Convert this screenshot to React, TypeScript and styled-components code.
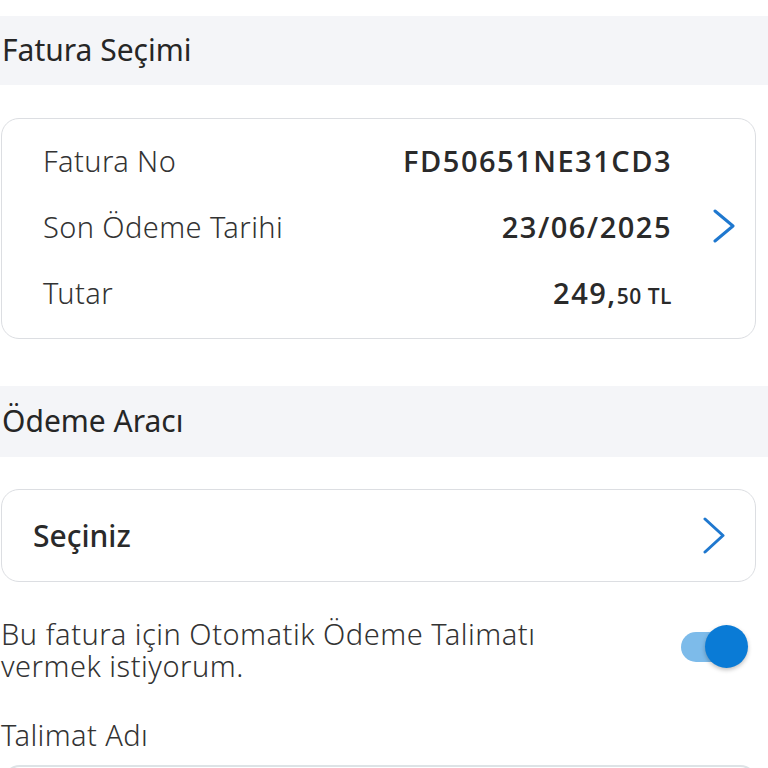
import * as React from 'react';
import styled, { createGlobalStyle } from 'styled-components';

const GlobalStyle = createGlobalStyle`
    html, body {
        margin: 0;
        padding: 0;
        background: #ffffff;
    }
    body {
        font-family: "Noto Sans", "Open Sans", sans-serif;
        color: #2b2b2b;
    }
`;

const StyledPage: any = styled.div`
    width: 768px;
    padding-top: 16px;
    display: flex;
    flex-direction: column;
`;

const StyledSectionHeader: any = styled.div`
    height: ${(p: any) => p.height}px;
    margin-top: ${(p: any) => p.top || 0}px;
    background: #f4f5f8;
    display: flex;
    align-items: center;
    padding-left: 2px;
    padding-bottom: 2px;
    box-sizing: border-box;
    font-size: 30px;
    font-weight: 400;
    color: #262626;
`;

const StyledCard: any = styled.div`
    margin-left: 1px;
    width: 755px;
    border: 1px solid #dcdee2;
    border-radius: 18px;
    background: #ffffff;
    margin-top: ${(p: any) => p.top}px;
    box-sizing: border-box;
`;

const StyledInvoiceCard: any = styled(StyledCard)`
    padding: 8px 0 13px 41px;
`;

const StyledRow: any = styled.div`
    display: grid;
    grid-template-columns: 1fr auto 84px;
    align-items: center;
    height: 66px;
`;

const StyledLabel: any = styled.span`
    font-size: 29px;
    font-weight: 300;
    letter-spacing: 0.4px;
    color: #333333;
`;

const StyledValue: any = styled.span`
    font-family: "Open Sans", "Noto Sans", sans-serif;
    font-size: 29px;
    font-weight: 600;
    color: #2a2a2a;
    letter-spacing: 1.5px;
    margin-right: -1px;
`;

const StyledSmall: any = styled.span`
    font-size: 21px;
    letter-spacing: 0.5px;
`;

const StyledChevronSlot: any = styled.div`
    display: flex;
    align-items: center;
    padding-left: ${(p: any) => p.offset}px;
`;

const StyledSelectCard: any = styled(StyledCard)`
    height: 93px;
    display: flex;
    align-items: center;
    justify-content: space-between;
    padding: 0 30px 0 31px;
`;

const StyledSelectText: any = styled.span`
    font-size: 30px;
    font-weight: 500;
    color: #2a2a2a;
`;

const StyledToggleRow: any = styled.div`
    margin-top: 36px;
    display: flex;
    align-items: center;
    justify-content: space-between;
    padding: 0 20px 0 1px;
`;

const StyledToggleText: any = styled.p`
    margin: 0;
    font-size: 29px;
    font-weight: 300;
    letter-spacing: 0.5px;
    line-height: 32px;
    color: #333333;
    width: 600px;
`;

const StyledSwitch: any = styled.div`
    position: relative;
    width: 67px;
    height: 44px;
    margin-top: -6px;
    display: flex;
    align-items: center;
`;

const StyledTrack: any = styled.div`
    width: 54px;
    height: 30px;
    border-radius: 15px;
    background: #7dbbea;
`;

const StyledKnob: any = styled.div`
    position: absolute;
    right: 0;
    top: 0;
    width: 43px;
    height: 43px;
    border-radius: 50%;
    background: #0a7bd6;
    box-shadow: 0 2px 4px rgba(0, 0, 0, 0.25);
`;

const StyledFieldLabel: any = styled.div`
    margin-top: 37px;
    padding-left: 1px;
    font-size: 29px;
    font-weight: 300;
    letter-spacing: 0.4px;
    line-height: 32px;
    color: #333333;
`;

const StyledInputBox: any = styled.div`
    margin: 14px 0 0 2px;
    width: 752px;
    height: 80px;
    border: 2px solid #dde3e6;
    border-radius: 18px;
`;

const Chevron: React.FunctionComponent<{ w: number; h: number }> = ({ w, h }) => (
    <svg width={w} height={h} viewBox={`0 0 ${w} ${h}`} fill="none">
        <path
            d={`M2 2 L${w - 2} ${h / 2} L2 ${h - 2}`}
            stroke="#1f78cf"
            strokeWidth={3}
            strokeLinecap="round"
            strokeLinejoin="round"
        />
    </svg>
);

const App: React.FunctionComponent = () => {
    return (
        <StyledPage>
            <GlobalStyle />
            <StyledSectionHeader height={69}>Fatura Seçimi</StyledSectionHeader>
            <StyledInvoiceCard top={33}>
                <StyledRow>
                    <StyledLabel>Fatura No</StyledLabel>
                    <StyledValue>FD50651NE31CD3</StyledValue>
                    <span />
                </StyledRow>
                <StyledRow>
                    <StyledLabel>Son Ödeme Tarihi</StyledLabel>
                    <StyledValue>23/06/2025</StyledValue>
                    <StyledChevronSlot offset={42}><Chevron w={22} h={34} /></StyledChevronSlot>
                </StyledRow>
                <StyledRow>
                    <StyledLabel>Tutar</StyledLabel>
                    <StyledValue>249,<StyledSmall>50 TL</StyledSmall></StyledValue>
                    <span />
                </StyledRow>
            </StyledInvoiceCard>
            <StyledSectionHeader height={71} top={47}>Ödeme Aracı</StyledSectionHeader>
            <StyledSelectCard top={32}>
                <StyledSelectText>Seçiniz</StyledSelectText>
                <Chevron w={22} h={37} />
            </StyledSelectCard>
            <StyledToggleRow>
                <StyledToggleText>Bu fatura için Otomatik Ödeme Talimatı vermek istiyorum.</StyledToggleText>
                <StyledSwitch>
                    <StyledTrack />
                    <StyledKnob />
                </StyledSwitch>
            </StyledToggleRow>
            <StyledFieldLabel>Talimat Adı</StyledFieldLabel>
            <StyledInputBox />
        </StyledPage>
    );
};

export default App;
